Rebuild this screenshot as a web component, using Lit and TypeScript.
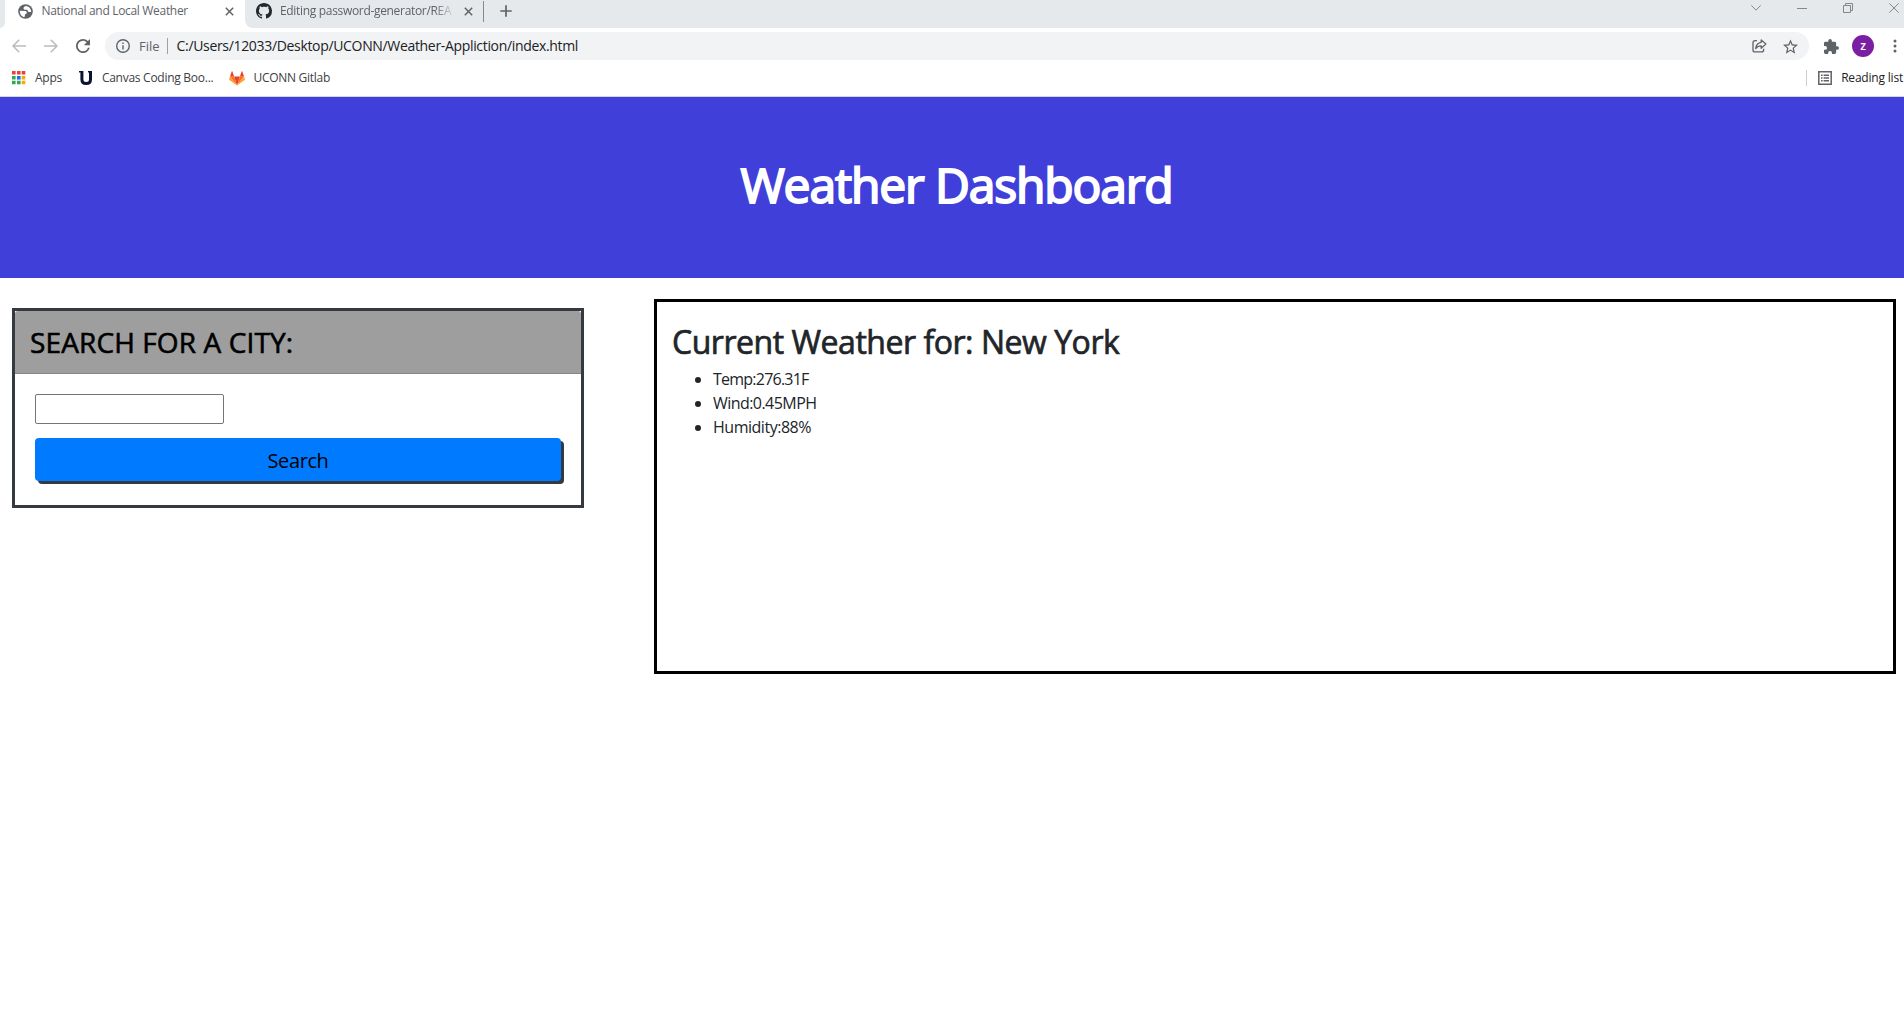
import { LitElement, html, css, svg } from "lit";
import { customElement, property } from "lit/decorators.js";

const icons: Record<string, unknown> = {
  globe: svg`<svg width="17" height="17" viewBox="0 0 24 24"><circle cx="12" cy="12" r="10.3" fill="#5f6368"/><path fill="#fff" d="M4 11l7.500.3c1.500 0 2.300.9 2.300 2.200 0 1.500-1 2.200-2.300 2.500l-.8 3.900C6.700 19.600 4 16 4 12zM12 4.200c-1.500.9-2.800 1.600-2.800 3.100 0 1.600 1.300 2.200 3 2.200h1.600c1 0 1.300.7 1.300 1.500 0 1 .7 1.600 1.800 1.600H20C20.200 8 16.500 4 12 4.200z"/></svg>`,
  github: svg`<svg width="16" height="16" viewBox="0 0 16 16"><path fill="#24292f" d="M8 0C3.580 0 0 3.580 0 8c0 3.540 2.290 6.530 5.470 7.590.4.070.55-.17.55-.38 0-.19-.01-.82-.01-1.490-2.010.37-2.530-.49-2.690-.94-.09-.23-.48-.94-.82-1.130-.28-.15-.68-.52-.01-.53.63-.01 1.080.58 1.230.82.72 1.210 1.870.87 2.330.66.07-.52.28-.87.51-1.070-1.780-.2-3.640-.89-3.640-3.950 0-.87.31-1.590.82-2.150-.08-.2-.36-1.020.08-2.120 0 0 .67-.21 2.200.82.64-.18 1.320-.27 2-.27s1.360.09 2 .27c1.530-1.040 2.200-.82 2.200-.82.44 1.100.16 1.920.08 2.120.51.56.82 1.270.82 2.150 0 3.070-1.870 3.750-3.650 3.950.29.25.54.73.54 1.480 0 1.070-.01 1.930-.01 2.200 0 .21.15.46.55.38A8.010 8.010 0 0 0 16 8c0-4.420-3.580-8-8-8z"/></svg>`,
  close: svg`<svg width="9" height="9" viewBox="0 0 9 9"><path d="M.8.8l7.400 7.400M8.200.8L.8 8.200" stroke="#5f6368" stroke-width="1.500"/></svg>`,
  plus: svg`<svg width="12" height="12" viewBox="0 0 12 12"><path d="M6 .3v11.400M.3 6h11.400" stroke="#5f6368" stroke-width="1.700"/></svg>`,
  chevron: svg`<svg width="10" height="6" viewBox="0 0 10 6"><path d="M.4.4L5 5.200 9.600.4" fill="none" stroke="#84888c"/></svg>`,
  minimize: svg`<svg width="10" height="10" viewBox="0 0 10 10"><path d="M0 5.500h10" stroke="#84888c"/></svg>`,
  restore: svg`<svg width="10" height="10" viewBox="0 0 10 10"><path d="M.5 2.500h7v7h-7zM2.500 2.500v-2h7v7h-2" fill="none" stroke="#84888c"/></svg>`,
  exit: svg`<svg width="10" height="10" viewBox="0 0 10 10"><path d="M.3.3l9.400 9.400M9.700.3L.3 9.700" stroke="#84888c"/></svg>`,
  back: svg`<svg width="14" height="14" viewBox="0 0 14 14"><path d="M14 7H1.200M7.200.7L1 7l6.200 6.300" fill="none" stroke="#babcbe" stroke-width="1.600"/></svg>`,
  forward: svg`<svg width="14" height="14" viewBox="0 0 14 14"><path d="M0 7h12.800M6.800.7L13 7l-6.200 6.300" fill="none" stroke="#babcbe" stroke-width="1.600"/></svg>`,
  reload: svg`<svg width="14" height="14" viewBox="4 4 16 16"><path fill="#5f6368" d="M17.650 6.350A7.958 7.958 0 0 0 12 4a8 8 0 1 0 7.730 10h-2.080A5.990 5.990 0 0 1 12 18a6 6 0 1 1 0-12c1.660 0 3.140.69 4.220 1.780L13 11h7V4z"/></svg>`,
  info: svg`<svg width="14" height="14" viewBox="2 2 20 20"><path fill="#5f6368" d="M11 7h2v2h-2zm0 4h2v6h-2zm1-9a10 10 0 1 0 0 20 10 10 0 0 0 0-20zm0 18a8 8 0 1 1 0-16 8 8 0 0 1 0 16z"/></svg>`,
  share: svg`<svg width="15" height="14" viewBox="0 0 15 14"><g fill="none" stroke="#5f6368" stroke-width="1.300" stroke-linejoin="round"><path d="M5 1.700H3Q1 1.700 1 3.700v7.200q0 2 2 2h6.600q2 0 2-2V9.800"/><path d="M9.200 1l4.700 4.100-4.700 4.100V6.900C6.600 6.900 5 7.700 3.700 9.500 4.100 6.200 5.900 3.700 9.200 3.300z"/></g></svg>`,
  star: svg`<svg width="15" height="15" viewBox="2 1.500 20 20"><path fill="#5f6368" d="M22 9.240l-7.190-.62L12 2 9.190 8.630 2 9.240l5.460 4.730L5.820 21 12 17.270 18.180 21l-1.630-7.030zM12 15.400l-3.760 2.270 1-4.280-3.320-2.880 4.380-.38L12 6.100l1.710 4.040 4.380.38-3.320 2.880 1 4.280z"/></svg>`,
  puzzle: svg`<svg width="15" height="15" viewBox="2 1 21 21"><path fill="#5f6368" d="M20.500 11H19V7a2 2 0 0 0-2-2h-4V3.500a2.500 2.500 0 0 0-5 0V5H4a2 2 0 0 0-2 2v3.800h1.500a2.700 2.700 0 0 1 0 5.400H2V20a2 2 0 0 0 2 2h3.800v-1.500a2.700 2.700 0 0 1 5.400 0V22H17a2 2 0 0 0 2-2v-4h1.500a2.500 2.500 0 0 0 0-5z"/></svg>`,
  dots: svg`<svg width="4" height="14" viewBox="0 0 4 14"><g fill="#5f6368"><circle cx="2" cy="2" r="1.500"/><circle cx="2" cy="7" r="1.500"/><circle cx="2" cy="12" r="1.500"/></g></svg>`,
  apps: svg`<svg width="14" height="14" viewBox="0 0 14 14"><path fill="#ea4335" d="M0 0h3.600v3.600H0zM5 0h3.600v3.600H5zM9.700 0h3.600v3.600H9.700z"/><path fill="#34a853" d="M0 5h3.600v3.600H0zM0 9.700h3.600v3.600H0z"/><path fill="#1a73e8" d="M5 5h3.600v3.600H5z"/><path fill="#34a853" d="M5 9.700h3.600v3.600H5z"/><path fill="#f9ab00" d="M9.700 5h3.600v3.600H9.700zM9.700 9.700h3.600v3.600H9.700z"/></svg>`,
  canvas: svg`<svg width="14" height="15" viewBox="0 0 14 15"><path d="M2.900 0v8.500q0 4 4.300 4t4.300-4V0" fill="none" stroke="#0a1330" stroke-width="3"/><path d="M0 0h3v1.600H0zM9 0h2v1.600H9z" fill="#0a1330"/></svg>`,
  gitlab: svg`<svg width="16" height="15" viewBox="0 0 16 15"><path fill="#e24329" d="M8 14.500L10.900 5.600H5.100z"/><path fill="#fc6d26" d="M8 14.500L5.100 5.600H1zM8 14.500l2.900-8.900H15z"/><path fill="#fca326" d="M1 5.600L.1 8.300q-.1.500.3.800L8 14.500zM15 5.600l.9 2.700q.1.500-.3.800L8 14.500z"/><path fill="#e24329" d="M1 5.600h4.100L3.300.3q-.3-.5-.5 0zM15 5.600h-4.100L12.700.3q.3-.5.500 0z"/></svg>`,
  list: svg`<svg width="14" height="14" viewBox="0 0 14 14"><path d="M.8.8h12.400v12.400H.8z" fill="none" stroke="#5f6368" stroke-width="1.500"/><path d="M3 4.200h1.600M5.600 4.200H11M3 7h1.600M5.600 7H11M3 9.800h1.600M5.600 9.800H11" stroke="#5f6368" stroke-width="1.400"/></svg>`,
};

@customElement("browser-chrome")
class BrowserChrome extends LitElement {
  static styles = css`
    :host { display: block; box-sizing: border-box; height: 97px; border-bottom: 1px solid #d5d7da; background: #fff; color: #3c4043;
      font: 12px/16px "Open Sans", "Noto Sans", sans-serif; letter-spacing: -0.27px; white-space: nowrap; }
    * { box-sizing: border-box; }
    svg { display: block; flex: none; }
    .strip { display: flex; height: 28px; }
    .edge { width: 5px; background: #e5e9ec; border-bottom-right-radius: 7px; }
    .tab { display: flex; align-items: center; height: 22px; color: #5f6368; letter-spacing: -0.32px; }
    .active { width: 240px; padding-left: 11.500px; }
    .active .label { width: 183px; margin-left: 8px; }
    .label { padding-bottom: 1px; }
    .rest { flex: 1; display: flex; background: #e5e9ec; border-bottom-left-radius: 8px; }
    .second { width: 238px; padding-left: 11px; }
    .second .label { width: 176px; margin: 0 8px 0 8px;
      -webkit-mask-image: linear-gradient(90deg, #000 154px, transparent 176px);
      mask-image: linear-gradient(90deg, #000 154px, transparent 176px); }
    .sep { width: 1px; height: 21px; margin-top: 1px; background: #85898d; }
    .new { margin: 5px 0 0 16px; }
    .controls { display: flex; gap: 36px; align-items: center; height: 16px; margin-left: auto; padding-right: 5px; }
    .bar { display: flex; align-items: center; height: 36px; padding-left: 12px; }
    .nav { display: flex; gap: 18px; }
    .omni { display: flex; align-items: center; width: 1704px; height: 28px; margin-left: 15px; padding: 0 11px 0 11px;
      border-radius: 14px; background: #f1f3f4; }
    .scheme { margin: 0 7px 0 9px; font-size: 13px; letter-spacing: 0; color: #5f6368; }
    .bar .line { width: 1px; height: 16px; background: #9aa0a6; }
    .url { margin-left: 9px; font-size: 14px; line-height: 20px; letter-spacing: -0.33px; color: #202124; }
    .omni .share { margin-left: auto; margin-right: 16px; }
    .puzzle { margin-left: 15px; }
    .avatar { display: grid; place-items: center; width: 22px; height: 22px; margin: 0 19px 0 13px; border-radius: 50%;
      background: #7b1fa2; color: #fff; font-size: 12px; font-weight: 600; line-height: 14px; letter-spacing: 0; padding-bottom: 1px; }
    .marks { display: flex; align-items: center; height: 28px; padding-left: 12px; }
    .mark { display: flex; align-items: center; }
    .apps { gap: 9px; }
    .canvas { gap: 9px; margin-left: 17px; }
    .gitlab { gap: 8px; margin-left: 16px; }
    .reading { gap: 9px; margin-left: auto; padding: 0 1px 0 11px; border-left: 1px solid #ccced1; color: #202124; letter-spacing: -0.2px; }
  `;
  render() {
    return html`
      <div class="strip">
        <div class="edge"></div>
        <div class="tab active">${icons.globe}<span class="label">National and Local Weather</span>${icons.close}</div>
        <div class="rest">
          <div class="tab second">${icons.github}<span class="label">Editing password-generator/REA</span>${icons.close}</div>
          <div class="sep"></div>
          <div class="new">${icons.plus}</div>
          <div class="controls">${icons.chevron}${icons.minimize}${icons.restore}${icons.exit}</div>
        </div>
      </div>
      <div class="bar">
        <div class="nav">${icons.back}${icons.forward}${icons.reload}</div>
        <div class="omni">
          ${icons.info}<span class="scheme">File</span><span class="line"></span>
          <span class="url">C:/Users/12033/Desktop/UCONN/Weather-Appliction/index.html</span>
          <span class="share">${icons.share}</span>${icons.star}
        </div>
        <span class="puzzle">${icons.puzzle}</span><span class="avatar">z</span>${icons.dots}
      </div>
      <div class="marks">
        <span class="mark apps">${icons.apps}Apps</span>
        <span class="mark canvas">${icons.canvas}Canvas Coding Boo...</span>
        <span class="mark gitlab">${icons.gitlab}UCONN Gitlab</span>
        <span class="mark reading">${icons.list}Reading list</span>
      </div>`;
  }
}

@customElement("city-search")
class CitySearch extends LitElement {
  static styles = css`
    :host { display: block; width: 572px; border: 3px solid #343a40; box-sizing: border-box; background: #fff; }
    * { box-sizing: border-box; }
    .head { display: flex; align-items: center; height: 63px; padding: 0 0 0 15px; background: #9e9e9e;
      border-bottom: 1px solid #868686; border-radius: 3px 3px 0 0; }
    .title { margin: 0; font-size: 28px; font-weight: 400; line-height: 34px; letter-spacing: 0.12px; color: #000; -webkit-text-stroke: 0.6px #000; }
    .body { display: flex; flex-direction: column; align-items: flex-start; gap: 14px; padding: 20px 20px 24px; }
    .field { width: 189px; height: 30px; padding: 1px 2px; border: 1px solid #767676; border-radius: 2px; background: #fff; font: inherit; }
    .button { width: 526px; height: 43px; padding: 2px 0 0; border: 0; border-radius: 4px; background: #007bff; color: #000;
      box-shadow: 3px 3px #343a40; font: 20px/30px "Open Sans", "Noto Sans", sans-serif; letter-spacing: -0.39px; }
  `;
  render() {
    return html`
      <div class="head"><h3 class="title">SEARCH FOR A CITY:</h3></div>
      <div class="body"><input class="field" type="text" /><button class="button">Search</button></div>`;
  }
}

@customElement("current-weather")
class CurrentWeather extends LitElement {
  @property() city = "New York";
  static styles = css`
    :host { display: block; width: 1242px; height: 375px; padding: 21px 14px 0 15px; border: 3px solid #000; box-sizing: border-box; color: #212529; }
    .title { margin: 0 0 6px; font-size: 32px; font-weight: 400; line-height: 38px; letter-spacing: -0.47px; -webkit-text-stroke: 0.7px #212529; }
    .list { margin: 0; padding-left: 41px; font-size: 16px; line-height: 24px; }
    .temp { letter-spacing: -0.77px; }
    .wind { letter-spacing: -0.55px; }
    .humidity { letter-spacing: -0.48px; }
  `;
  render() {
    return html`
      <h2 class="title">Current Weather for: ${this.city}</h2>
      <ul class="list">
        <li class="temp">Temp:276.31F</li>
        <li class="wind">Wind:0.45MPH</li>
        <li class="humidity">Humidity:88%</li>
      </ul>`;
  }
}

@customElement("app-root")
class AppRoot extends LitElement {
  static styles = css`
    :host { display: block; height: 1017px; overflow: hidden; background: #fff; font-family: "Open Sans", "Noto Sans", sans-serif; }
    .hero { box-sizing: border-box; height: 181px; padding: 58px 0 0 9px; background: #413fd9; color: #fff; text-align: center; }
    .title { margin: 0; font-size: 48px; font-weight: 400; line-height: 60px; letter-spacing: -1.12px; -webkit-text-stroke: 1.9px #fff; }
    .main { display: flex; justify-content: space-between; align-items: flex-start; padding: 21px 8px 0 12px; }
    .search { margin-top: 9px; }
  `;
  render() {
    return html`
      <browser-chrome></browser-chrome>
      <header class="hero"><h1 class="title">Weather Dashboard</h1></header>
      <main class="main">
        <city-search class="search"></city-search>
        <current-weather></current-weather>
      </main>`;
  }
}
